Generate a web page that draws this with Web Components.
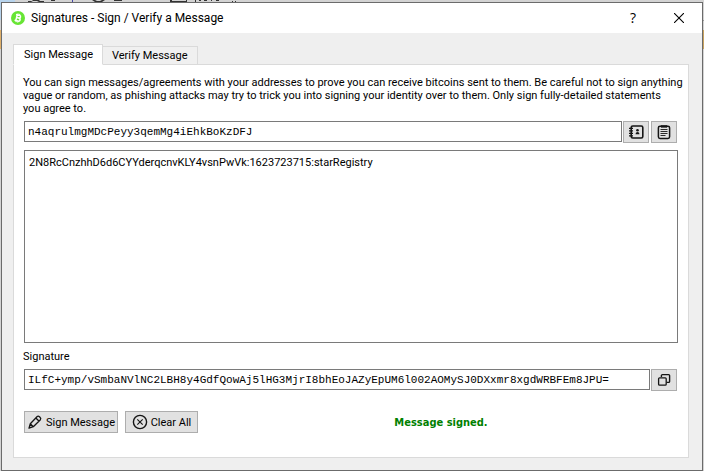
<!DOCTYPE html>
<html lang="en">
<head>
<meta charset="utf-8">
<title>Signatures - Sign / Verify a Message</title>
<style>
  html, body { margin: 0; }
  body {
    --line: #dadada;
    --field-line: #7a7a7a;
    min-height: 100vh;
    box-sizing: border-box;
    display: flex;
    padding: 2px 1px 0;
    background: #d3d3d3;
    color: #000;
    font: 11px/13px Roboto, "Liberation Sans", sans-serif;
  }
</style>
</head>
<body>
<window-behind></window-behind>
<app-dialog heading="Signatures - Sign / Verify a Message">
  <tab-panel>
    <sign-form></sign-form>
  </tab-panel>
</app-dialog>

<script>
const define = (name, html, setup) => customElements.define(name, class extends HTMLElement {
  constructor() {
    super();
    this.attachShadow({ mode: "open" }).innerHTML = html;
  }
  connectedCallback() { if (setup) setup(this, this.shadowRoot); }
});

/* Slivers of the main window that show around the dialog */
define("window-behind", `
  <style>
    :host { position: absolute; inset: 0; z-index: -1; overflow: hidden; }
    svg { display: block; position: absolute; top: 0; }
    .l { left: 0; } .r { right: 0; }
  </style>
  <svg class="l" width="240" height="60" aria-hidden="true">
    <path fill="#b7d3ec" d="M0 0h15v20H0z"/>
    <path fill="#dfb06a" d="M0 30h1v19H0z"/>
    <path fill="#333" d="M28 1h4l1-1h6l1 1h4v1h-5l-2-1h-4l-2 1h-3zM51 0h4v1h-4zM92 0h3l2 1h3l2-1h3l-3 2h-7zM114 0h5v1h-5zM119 0h3v1h-3zM170 0h2v1h14V0h1v2h-17zM195 0h1v2h-1zM199 0h2v1h-2zM204 0h3v1h-3zM211 0h1v1h-1zM216 0h3v1h-3zM232 1h1v1h-1zM235 1h1v1h-1z"/>
    <path fill="#4545a8" d="M72 0h1v2h-1z"/>
  </svg>
  <svg class="r" width="1" height="60" aria-hidden="true">
    <path fill="#999" d="M0 20h1v1H0z"/><path fill="#c9a35f" d="M0 30h1v19H0z"/>
  </svg>`);

define("coin-logo", `
  <style>:host { display: block; width: 14px; height: 14px; } svg { display: block; }</style>
  <svg width="14" height="14" viewBox="0 0 14 14" aria-hidden="true">
    <circle cx="7" cy="7" r="7" fill="#67e534"/>
    <g transform="rotate(14 7 7)" fill="none" stroke="#fff" stroke-width="1.5">
      <path d="M5.5 3.9v6.2M4.2 4h3.5c2 0 2 2.8 0 2.8H5.5M7.7 6.9c2.4 0 2.4 3.1 0 3.1H4.2"/>
      <path stroke-width="1" d="M6 2.500v1.400M7.800 2.500v1.400M6 10v1.500M7.800 10v1.500"/>
    </g>
  </svg>`);

define("app-dialog", `
  <style>
    :host { flex: 1; min-width: 0; display: flex; flex-direction: column; border: 1px solid #6b6b6b; background: #efefef; }
    header { display: flex; align-items: center; height: 30px; padding: 0 0 0 9px; background: #fff; }
    h1 { flex: 1; margin: 0 0 0 6px; font-size: 12px; line-height: 16px; font-weight: 400; }
    button { width: 46px; height: 30px; padding: 0; border: 0; background: none; font: 14px/28px "Open Sans", sans-serif; color: #000; }
    button svg { display: block; margin: 0 auto; }
    main { flex: 1; display: flex; padding: 11px 13px 12px 11px; }
    ::slotted(*) { flex: 1; min-width: 0; }
  </style>
  <header>
    <coin-logo></coin-logo>
    <h1></h1>
    <button type="button" aria-label="Help">?</button>
    <button type="button" aria-label="Close">
      <svg width="10" height="10" viewBox="0 0 10 10"><path d="M0 0l10 10M10 0L0 10" stroke="#000" stroke-width="1.1"/></svg>
    </button>
  </header>
  <main><slot></slot></main>`,
  (el, root) => { root.querySelector("h1").textContent = el.getAttribute("heading"); });

define("tab-panel", `
  <style>
    :host { display: flex; flex-direction: column; }
    nav { display: flex; align-items: flex-end; position: relative; z-index: 1; margin-bottom: -1px; }
    button { height: 19px; padding: 0 9px; border: 1px solid var(--line); border-left: 0; background: #f0f0f0; font: inherit; color: inherit; }
    button[aria-selected=true] { height: 21px; padding: 0 9px 0 10px; border-left: 1px solid var(--line); border-bottom-color: #fff; background: #fff; }
    section { flex: 1; display: flex; border: 1px solid var(--line); background: #fff; }
    ::slotted(*) { flex: 1; min-width: 0; }
  </style>
  <nav role="tablist">
    <button type="button" role="tab" aria-selected="true">Sign Message</button>
    <button type="button" role="tab" aria-selected="false">Verify Message</button>
  </nav>
  <section role="tabpanel"><slot></slot></section>`);

define("push-button", `
  <style>
    :host { display: block; flex: none; }
    button { display: flex; align-items: center; justify-content: center; gap: 3px; height: 22px; padding: 0 2px; min-width: 26px; border: 1px solid #adadad; background: #e1e1e1; font: inherit; color: inherit; }
    :host([wide]) button { min-width: 73px; }
    slot { display: flex; }
  </style>
  <button type="button"><slot name="icon"></slot><span></span></button>`,
  (el, root) => {
    const text = el.getAttribute("text"), b = root.querySelector("button"), s = root.querySelector("span");
    if (text) s.textContent = text; else s.remove();
    if (el.getAttribute("hint")) b.setAttribute("aria-label", el.getAttribute("hint"));
  });

define("sign-form", `
  <style>
    :host { display: flex; flex-direction: column; padding: 11px 0 24px; }
    p { margin: 0 0 6px; padding: 0 0 0 9px; }
    .row { display: flex; gap: 1px; padding: 0 11px 0 10px; }
    .row push-button + push-button { margin-left: 1px; }
    input, textarea { box-sizing: border-box; min-width: 0; border: 1px solid var(--field-line); border-radius: 0; background: #fff; color: #000; outline: 0; }
    input { flex: 1; height: 21px; padding: 0 3px; font: 11px/17px "Liberation Mono", "Courier New", monospace; }
    .message { flex: 1; display: flex; padding: 7px 10px 7px; }
    textarea { flex: 1; resize: none; padding: 5px 4px; font: inherit; }
    label { padding: 0 9px 6px; }
    .actions { align-items: center; gap: 6px; padding: 20px 10px 0 10px; }
    output { flex: 1; text-align: center; color: #008000; font: bold 11px/13px "DejaVu Sans Condensed", "DejaVu Sans", sans-serif; }
    svg { display: block; fill: none; stroke: #151515; }
  </style>
  <p>You can sign messages/agreements with your addresses to prove you can receive bitcoins sent to them. Be careful not to sign anything<br>vague or random, as phishing attacks may try to trick you into signing your identity over to them. Only sign fully-detailed statements<br>you agree to.</p>
  <div class="row">
    <input type="text" aria-label="Address" value="n4aqrulmgMDcPeyy3qemMg4iEhkBoKzDFJ">
    <push-button hint="Address book">
      <svg slot="icon" width="16" height="16" viewBox="0 0 16 16">
        <rect x="3.2" y="2" width="11.6" height="12" rx="1.5" stroke-width="1.6"/>
        <path d="M1 4.3h4M1 6.8h4M1 9.3h4M1 11.8h4" stroke-width="1.3"/>
        <circle cx="9.5" cy="6.3" r="1.3" fill="#151515" stroke="none"/><path d="M7.6 10.3c0-3 3.8-3 3.8 0z" fill="#151515" stroke="none"/>
      </svg>
    </push-button>
    <push-button hint="Paste">
      <svg slot="icon" width="16" height="16" viewBox="0 0 16 16">
        <rect x="2.4" y="2.2" width="11.2" height="12.2" rx="1.6" stroke-width="1.5"/>
        <path d="M5 1.700h6v1.500H5z" fill="#151515" stroke-width=".8"/>
        <path d="M4.500 5.500h7M4.500 7.500h7M4.500 9.500h7M4.500 11.500h5" stroke-width=".9"/>
      </svg>
    </push-button>
  </div>
  <div class="message"><textarea aria-label="Message" spellcheck="false">2N8RcCnzhhD6d6CYYderqcnvKLY4vsnPwVk:1623723715:starRegistry</textarea></div>
  <label for="signature">Signature</label>
  <div class="row">
    <input id="signature" type="text" readonly value="ILfC+ymp/vSmbaNVlNC2LBH8y4GdfQowAj5lHG3MjrI8bhEoJAZyEpUM6l002AOMySJ0DXxmr8xgdWRBFEm8JPU=">
    <push-button hint="Copy signature">
      <svg slot="icon" width="16" height="16" viewBox="0 0 16 16">
        <path d="M5.4 5V3.6a1 1 0 0 1 1-1h6.2a1 1 0 0 1 1 1v5.8a1 1 0 0 1-1 1h-2" stroke-width="1.4"/>
        <rect x="2.6" y="5.8" width="7.6" height="7.4" rx="1" stroke-width="1.3"/>
      </svg>
    </push-button>
  </div>
  <div class="row actions">
    <push-button text="Sign Message">
      <svg slot="icon" width="16" height="16" viewBox="0 0 16 16">
        <path d="M2 14.200l1.300-4.400 6.900-7.300c1.200-1.200 4.600 1.500 3.200 3.200L6.300 12.700zM8.800 4l3.100 3M3.300 9.800l3 2.900" stroke-width="1.300" stroke-linejoin="round"/>
      </svg>
    </push-button>
    <push-button wide text="Clear All">
      <svg slot="icon" width="16" height="16" viewBox="0 0 16 16">
        <circle cx="8" cy="8" r="6.600" stroke-width="1.400"/>
        <path d="M5.300 5.300l5.400 5.400M10.700 5.300l-5.400 5.400" stroke-width="1.100"/>
      </svg>
    </push-button>
    <output>Message signed.</output>
  </div>`);
</script>
</body>
</html>
